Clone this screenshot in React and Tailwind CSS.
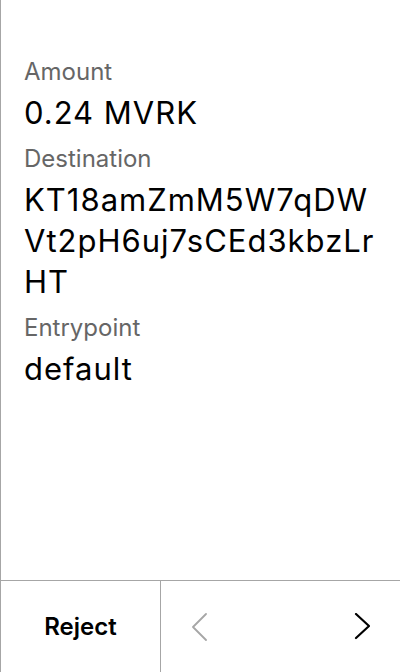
const Field = ({ label, value }) => (
  <div className="flex flex-col">
    <span className="text-[24px] leading-[32px] text-[#666666]">{label}</span>
    <span className="text-[31px] leading-[41px] tracking-[1px] text-black break-all mt-[4px]">{value}</span>
  </div>
);

const Chevron = ({ dir, color, width }) => (
  <svg width="16" height="28" viewBox="0 0 16 28" fill="none">
    <polyline
      points={dir === "left" ? "14,1 1,14 14,27" : "2,1 15,13 2,25"}
      stroke={color}
      strokeWidth={width}
      strokeLinecap="round"
      strokeLinejoin="round"
    />
  </svg>
);

const App = () => {
  return (
    <div
      className="w-[400px] h-[672px] bg-white border-l border-[#a6a6a6] flex flex-col"
      style={{ fontFamily: "Inter, 'Noto Sans', sans-serif" }}
    >
      <div className="flex-1 pl-[23px] pr-[20px] pt-[56px] flex flex-col gap-[10px]">
        <Field label="Amount" value="0.24 MVRK" />
        <Field label="Destination" value="KT18amZmM5W7qDWVt2pH6uj7sCEd3kbzLrHT" />
        <Field label="Entrypoint" value="default" />
      </div>

      <div className="h-[92px] border-t border-[#a6a6a6] flex">
        <button className="w-[160px] border-r border-[#a6a6a6] flex items-center justify-center text-[24px] font-semibold text-black">
          Reject
        </button>
        <div className="flex-1 flex items-center justify-between pl-[31px] pr-[30px]">
          <Chevron dir="left" color="#a6a6a6" width={1.8} />
          <Chevron dir="right" color="#000000" width={2.2} />
        </div>
      </div>
    </div>
  );
};

export default App;
